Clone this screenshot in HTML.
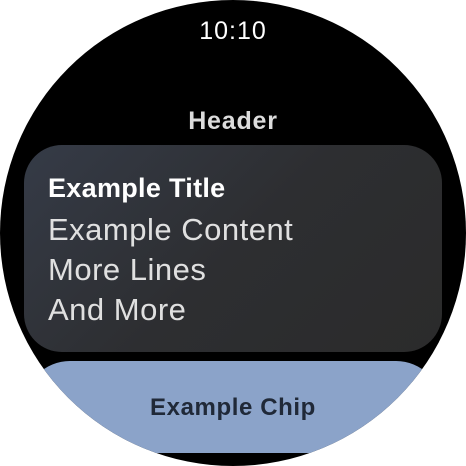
<!DOCTYPE html>
<html><head><style>
html,body{margin:0;padding:0;background:#fff;}
body{width:466px;height:466px;position:relative;overflow:hidden;font-family:"Liberation Sans",sans-serif;}
.circle{position:absolute;left:0;top:0;width:466px;height:466px;border-radius:50%;background:#000;overflow:hidden;}
.time{position:absolute;top:16px;left:0;width:466px;text-align:center;color:#fff;font-size:25px;line-height:30px;letter-spacing:1px;}
.header{position:absolute;top:106px;left:0;width:466px;text-align:center;color:#dcdcdc;font-size:25px;line-height:30px;font-weight:bold;letter-spacing:0.8px;}
.card{position:absolute;left:24px;top:145px;width:418px;height:207px;border-radius:38px;background:linear-gradient(135deg,#353b47 0%,#2d2e31 50%,#2b2b2b 100%);}
.t{position:absolute;left:24px;color:#fff;line-height:34px;white-space:nowrap;}
.title{top:26px;font-size:27px;font-weight:bold;letter-spacing:0.3px;}
.l{font-size:31px;color:#e0e0e0;letter-spacing:0.5px;}
.chip{position:absolute;left:24px;top:361px;width:418px;height:92px;border-radius:46px;background:#8ba3c9;}
.chip span{position:absolute;left:0;width:100%;top:32px;line-height:30px;text-align:center;font-size:24px;font-weight:bold;color:#202938;letter-spacing:0.6px;}
</style></head><body>
<div class="circle">
<div class="time">10:10</div>
<div class="header">Header</div>
<div class="card">
<div class="t title">Example Title</div>
<div class="t l" style="top:68px">Example Content</div>
<div class="t l" style="top:108px">More Lines</div>
<div class="t l" style="top:148px">And More</div>
</div>
<div class="chip"><span>Example Chip</span></div>
</div>
</body></html>
